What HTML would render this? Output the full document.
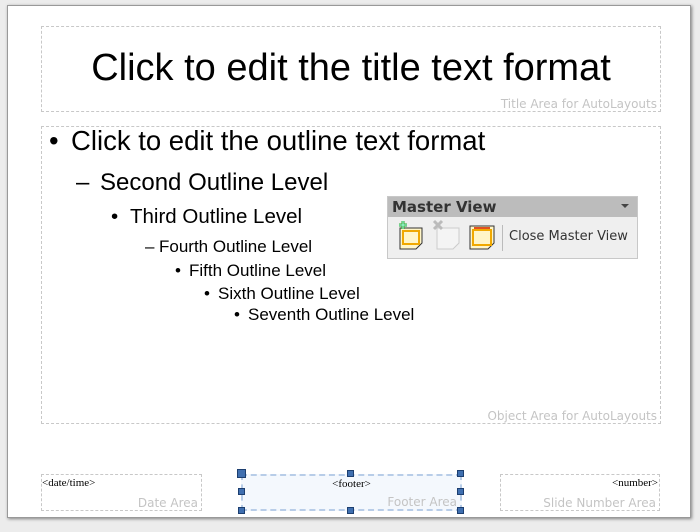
<!DOCTYPE html>
<html><head><style>
body{margin:0;width:700px;height:532px;background:#ececec;position:relative;overflow:hidden;font-family:"Liberation Sans",sans-serif}
.slide{position:absolute;left:7px;top:5px;width:684px;height:513px;background:#fff;box-shadow:1px 1px 3px rgba(0,0,0,.45);border:1px solid #999;box-sizing:border-box}
.box{position:absolute;border:1px dashed #c8c8c8;box-sizing:border-box}
.lbl{position:absolute;right:3px;bottom:0px;font-family:"DejaVu Sans",sans-serif;font-size:12px;color:#c4c4c4;white-space:nowrap}
.t{position:absolute;white-space:nowrap;color:#000}
.ser{font-family:"Liberation Serif",serif;font-size:11px;position:absolute;top:2px}
.h{position:absolute;width:7px;height:7px;background:#3f6fb0;border:1px solid #1d3f70;box-sizing:border-box}
</style></head><body>
<div class="slide"></div>
<div class="box" style="left:41px;top:26px;width:620px;height:86px"><div class="lbl">Title Area for AutoLayouts</div></div>
<div class="t" style="left:0;width:702px;text-align:center;top:47px;font-size:38px">Click to edit the title text format</div>
<div class="box" style="left:41px;top:126px;width:620px;height:298px"><div class="lbl">Object Area for AutoLayouts</div></div>
<div class="t" style="left:49px;top:125px;font-size:27.5px">•</div><div class="t" style="left:71px;top:125px;font-size:27.5px">Click to edit the outline text format</div>
<div class="t" style="left:76px;top:169px;font-size:24px">–</div><div class="t" style="left:100px;top:169px;font-size:24px">Second Outline Level</div>
<div class="t" style="left:111px;top:205px;font-size:20.5px">•</div><div class="t" style="left:130px;top:205px;font-size:20.5px">Third Outline Level</div>
<div class="t" style="left:145px;top:237px;font-size:17px">–</div><div class="t" style="left:159px;top:237px;font-size:17px">Fourth Outline Level</div>
<div class="t" style="left:175px;top:261px;font-size:17px">•</div><div class="t" style="left:189px;top:261px;font-size:17px">Fifth Outline Level</div>
<div class="t" style="left:204px;top:284px;font-size:17px">•</div><div class="t" style="left:218px;top:284px;font-size:17px">Sixth Outline Level</div>
<div class="t" style="left:234px;top:305px;font-size:17px">•</div><div class="t" style="left:248px;top:305px;font-size:17px">Seventh Outline Level</div>

<div style="position:absolute;left:387px;top:196px;width:251px;height:63px;background:#efefef;border:1px solid #c8c8c8;box-sizing:border-box">
 <div style="height:20px;background:#bcbcbc;font-family:'DejaVu Sans',sans-serif;font-weight:bold;font-size:15px;color:#333;padding-left:4px;line-height:20px;position:relative">Master View<span style="position:absolute;right:8px;top:7px;border-left:4px solid transparent;border-right:4px solid transparent;border-top:4px solid #444"></span></div>
 <svg width="250" height="40" style="position:absolute;left:0;top:20px">
  <path d="M12 11h22v15l-6 6h-16z" fill="#fff5c8" stroke="#333"/><rect x="15" y="14" width="16" height="13" fill="none" stroke="#f0a800" stroke-width="2"/>
  <path d="M11 8h8M15 4v8" stroke="#3a3" stroke-width="3"/><path d="M11 8h8M15 4v8" stroke="#afe" stroke-width="1"/>
  <path d="M49 11h22v15l-6 6h-16z" fill="#f4f4f4" stroke="#ccc"/><path d="M46 4l8 8M54 4l-8 8" stroke="#bbb" stroke-width="3"/>
  <path d="M82 9h24v17l-6 6h-18z" fill="#fff5c8" stroke="#333"/><rect x="85" y="13" width="18" height="15" fill="none" stroke="#f0a800" stroke-width="2"/><path d="M86 11h16" stroke="#e05020" stroke-width="2"/>
  <line x1="114.5" y1="8" x2="114.5" y2="34" stroke="#bbb"/>
  <text x="121" y="23" font-family="DejaVu Sans,sans-serif" font-size="13" fill="#333">Close Master View</text>
 </svg>
</div>

<div class="box" style="left:41px;top:474px;width:161px;height:37px"><span class="ser" style="left:0">&lt;date/time&gt;</span><div class="lbl">Date Area</div></div>
<div class="box" style="left:241px;top:474px;width:221px;height:37px;border:2px dashed #b8cde8;background:rgba(220,232,248,.3)"><span class="ser" style="left:0;width:100%;text-align:center">&lt;footer&gt;</span><div class="lbl">Footer Area</div></div>
<div class="box" style="left:500px;top:474px;width:160px;height:37px"><span class="ser" style="right:1px">&lt;number&gt;</span><div class="lbl">Slide Number Area</div></div>
<div class="h" style="left:237px;top:469px;width:9px;height:9px"></div>
<div class="h" style="left:347px;top:470px"></div>
<div class="h" style="left:457px;top:470px"></div>
<div class="h" style="left:238px;top:488px"></div>
<div class="h" style="left:457px;top:488px"></div>
<div class="h" style="left:238px;top:507px"></div>
<div class="h" style="left:347px;top:507px"></div>
<div class="h" style="left:457px;top:507px"></div>
</body></html>
